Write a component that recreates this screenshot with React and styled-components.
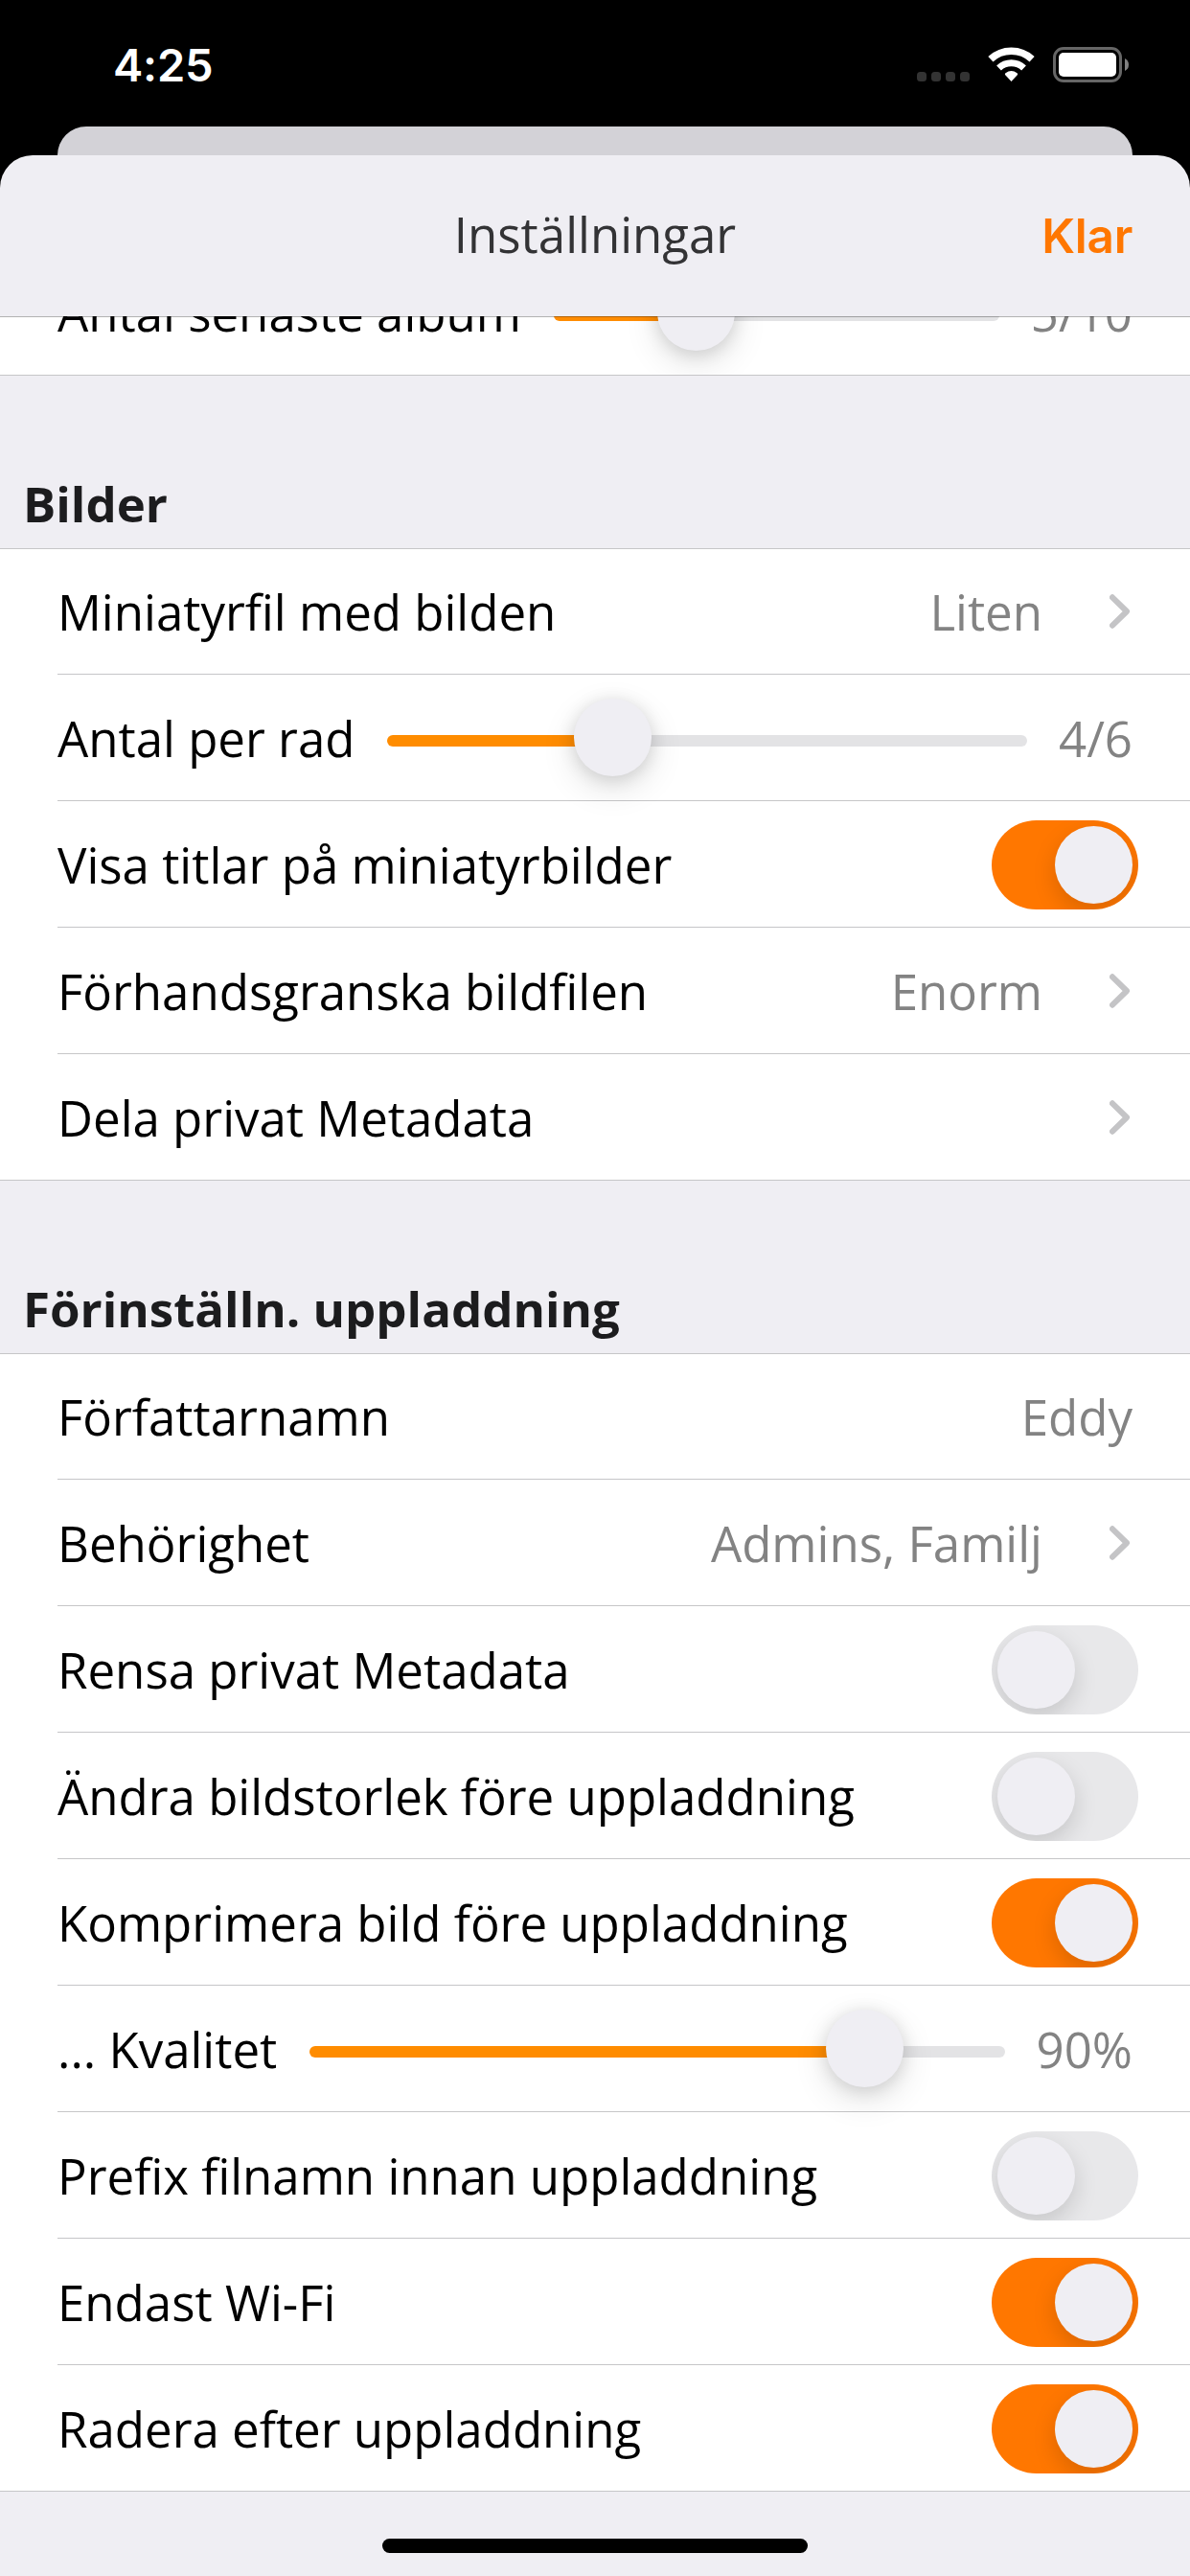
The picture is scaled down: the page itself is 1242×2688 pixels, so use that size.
import React from "react";
import styled, { createGlobalStyle } from "styled-components";

const GlobalStyle = createGlobalStyle`
  html, body { margin: 0; padding: 0; background: #000; }
  body { width: 1242px; height: 2688px; overflow: hidden; }
`;

const colors = {
  tint: "#ff7700",
  track: "#ff8c00",
  sheet: "#efeef3",
  line: "#c6c6c8",
  secondary: "#838383",
};

const Screen = styled.div`
  display: flex;
  flex-direction: column;
  width: 1242px;
  height: 2688px;
  background: #000;
  color: #000;
  font-family: "Open Sans", "Noto Sans", sans-serif;
  font-size: 51px;
  line-height: 70px;
  overflow: hidden;
`;

const StatusBar = styled.div`
  display: flex;
  justify-content: space-between;
  box-sizing: border-box;
  flex: none;
  height: 132px;
  padding: 0 64px 0 118px;
`;

const Clock = styled.div`
  padding-top: 33px;
  color: #fff;
  font-family: Inter, sans-serif;
  font-size: 47px;
  font-weight: 600;
  letter-spacing: -0.2px;
`;

const StatusIcons = styled.svg`
  display: block;
  width: 221px;
  height: 38px;
  margin-top: 49px;
`;

const BackSheet = styled.div`
  flex: none;
  height: 30px;
  margin: 0 60px;
  border-radius: 30px 30px 0 0;
  background: #d3d2d7;
`;

const Sheet = styled.div`
  display: flex;
  flex-direction: column;
  flex: 1;
  border-radius: 34px 34px 0 0;
  background: ${colors.sheet};
  overflow: hidden;
`;

const Header = styled.header`
  display: grid;
  grid-template-columns: 1fr auto 1fr;
  align-items: center;
  box-sizing: border-box;
  flex: none;
  height: 168px;
  padding: 0 60px 4px;
  box-shadow: 0 1px 0 rgba(0, 0, 0, 0.3);
  z-index: 1;
`;

const Title = styled.h1`
  grid-column: 2;
  margin: 0;
  color: #333335;
  font-size: 51px;
  font-weight: 400;
`;

const DoneButton = styled.button`
  justify-self: end;
  padding: 4px 0 0;
  border: 0;
  background: none;
  color: ${colors.tint};
  font-family: Inter, sans-serif;
  font-size: 49.5px;
  font-weight: 600;
  line-height: 70px;
  letter-spacing: -0.3px;
`;

const ScrolledRow = styled.div`
  display: flex;
  align-items: flex-end;
  flex: none;
  height: 61px;
  background: #fff;
  border-bottom: 1px solid ${colors.line};
  overflow: hidden;
`;

const SectionTitle = styled.h2`
  display: flex;
  align-items: flex-end;
  box-sizing: border-box;
  flex: none;
  height: 181px;
  margin: 0;
  padding: 0 24px 12px;
  border-bottom: 1px solid ${colors.line};
  color: #1c1c1e;
  font-size: 51px;
  font-weight: 700;
`;

const List = styled.div`
  flex: none;
  background: #fff;
  border-bottom: 1px solid ${colors.line};
`;

const Row = styled.div`
  display: flex;
  align-items: center;
  box-sizing: border-box;
  width: 100%;
  height: 131px;
  padding: 0 60px;
  flex: none;

  &:first-child {
    height: 130px;
  }
`;

const Divider = styled.div`
  height: 1px;
  margin-left: 60px;
  background: ${colors.line};
`;

const Label = styled.span`
  white-space: pre;
`;

const Value = styled.span`
  margin-left: auto;
  color: ${colors.secondary};
  white-space: pre;
`;

const Chevron = styled.svg`
  display: block;
  flex: none;
  width: 24px;
  height: 38px;
  margin: 0 0 0 ${(p) => (p.$afterValue ? "70px" : "auto")};
`;

const Track = styled.div`
  position: relative;
  flex: 1;
  height: 12px;
  margin: 6px 33px 0 33.5px;
  border-radius: 6px;
  background: linear-gradient(
    to right,
    ${colors.track} ${(p) => p.$fill * 100}%,
    #e3e3e5 ${(p) => p.$fill * 100}%
  );
`;

const Thumb = styled.div`
  position: absolute;
  top: -38px;
  left: calc((100% - 81px) * ${(p) => p.$fill});
  width: 81px;
  height: 81px;
  border-radius: 50%;
  background: ${colors.sheet};
  box-shadow: 0 12px 36px rgba(0, 0, 0, 0.12), 0 3px 18px rgba(0, 0, 0, 0.13);
`;

const Switch = styled.div`
  display: flex;
  justify-content: ${(p) => (p.$on ? "flex-end" : "flex-start")};
  box-sizing: border-box;
  flex: none;
  width: 153px;
  height: 93px;
  margin: 2px -6px 0 auto;
  padding: 6px;
  border-radius: 47px;
  background: ${(p) => (p.$on ? colors.tint : "#e8e8ea")};
  overflow: hidden;
`;

const Knob = styled.div`
  width: 81px;
  height: 81px;
  border-radius: 50%;
  background: ${colors.sheet};
  box-shadow: 0 9px 24px rgba(0, 0, 0, 0.15);
`;

const HomeArea = styled.div`
  display: flex;
  justify-content: center;
  padding-top: 49px;
`;

const HomeIndicator = styled.div`
  width: 444px;
  height: 15px;
  border-radius: 8px;
  background: #000;
`;

function SettingRow({ label, value, link, on, slider }) {
  return (
    <Row>
      <Label>{label}</Label>
      {slider !== undefined && (
        <Track $fill={slider}>
          <Thumb $fill={slider} />
        </Track>
      )}
      {value && <Value>{value}</Value>}
      {link && (
        <Chevron $afterValue={!!value} viewBox="0 0 24 38">
          <path
            d="M3 4.3 18 19 3 33.7"
            fill="none"
            stroke="#c4c4c6"
            strokeWidth="6"
            strokeLinecap="round"
            strokeLinejoin="round"
          />
        </Chevron>
      )}
      {on !== undefined && (
        <Switch $on={on} role="switch" aria-checked={on}>
          <Knob />
        </Switch>
      )}
    </Row>
  );
}

function SettingList({ rows }) {
  return (
    <List>
      {rows.map((row, i) => (
        <React.Fragment key={row.label}>
          {i > 0 && <Divider />}
          <SettingRow {...row} />
        </React.Fragment>
      ))}
    </List>
  );
}

const imageRows = [
  { label: "Miniatyrfil med bilden", value: "Liten", link: true },
  { label: "Antal per rad", value: "4/6", slider: 0.333 },
  { label: "Visa titlar på miniatyrbilder", on: true },
  { label: "Förhandsgranska bildfilen", value: "Enorm", link: true },
  { label: "Dela privat Metadata", link: true },
];

const uploadRows = [
  { label: "Författarnamn", value: "Eddy" },
  { label: "Behörighet", value: "Admins, Familj", link: true },
  { label: "Rensa privat Metadata", on: false },
  { label: "Ändra bildstorlek före uppladdning", on: false },
  { label: "Komprimera bild före uppladdning", on: true },
  { label: "... Kvalitet", value: "90%", slider: 0.837 },
  { label: "Prefix filnamn innan uppladdning", on: false },
  { label: "Endast Wi-Fi", on: true },
  { label: "Radera efter uppladdning", on: true },
];

export default function App() {
  return (
    <Screen>
      <GlobalStyle />
      <StatusBar>
        <Clock>4:25</Clock>
        <StatusIcons viewBox="957 49 221 38">
          {[957, 972, 987, 1002].map((x) => (
            <rect key={x} x={x} y="75" width="10" height="10" rx="3.5" fill="#333" />
          ))}
          <g fill="none" stroke="#fff">
            <path strokeWidth="7.5" d="M1033.9 61.8A31.7 31.7 0 0 1 1077.1 61.8" />
            <path strokeWidth="7" d="M1042.5 71A19 19 0 0 1 1068.5 71" />
          </g>
          <path d="M1055.5 85 1049 78Q1048.5 77 1049.5 76.3A10 10 0 0 1 1061.5 76.3Q1062.5 77 1062 78Z" fill="#fff" />
          <rect x="1100.5" y="50.5" width="69" height="34" rx="9.5" fill="none" stroke="#666" strokeWidth="3" />
          <rect x="1105" y="55" width="60" height="25" rx="5" fill="#fff" />
          <path d="M1174 61Q1178 63 1178 67.5T1174 74Z" fill="#808080" />
        </StatusIcons>
      </StatusBar>
      <BackSheet />
      <Sheet>
        <Header>
          <Title>Inställningar</Title>
          <DoneButton>Klar</DoneButton>
        </Header>
        <ScrolledRow>
          <SettingRow label="Antal senaste album" value="5/10" slider={0.281} />
        </ScrolledRow>
        <SectionTitle>Bilder</SectionTitle>
        <SettingList rows={imageRows} />
        <SectionTitle>Förinställn. uppladdning</SectionTitle>
        <SettingList rows={uploadRows} />
        <HomeArea>
          <HomeIndicator />
        </HomeArea>
      </Sheet>
    </Screen>
  );
}
